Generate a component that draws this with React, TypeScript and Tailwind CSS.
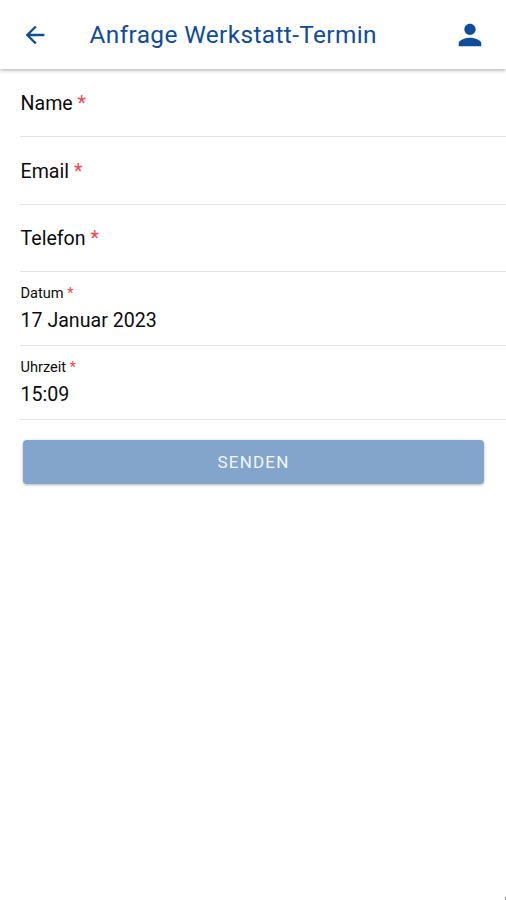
import React from "react";

type FieldProps = { label: string; value?: string };

function Field({ label, value }: FieldProps) {
  if (!value) {
    return (
      <div className="ml-5 flex h-[67.75px] items-center border-b border-[#e4e4e4] pl-[0.5px] pt-[3px] text-[19.6px] leading-6">
        <span>
          {label} <span className="text-[#f5454a]">*</span>
        </span>
      </div>
    );
  }
  return (
    <div className="ml-5 h-[73.75px] border-b border-[#e4e4e4] pl-[0.5px] pt-[12px]">
      <div className="text-[14.6px] leading-[18px]">
        {label} <span className="text-[#f5454a]">*</span>
      </div>
      <div className="mt-[7px] text-[19.6px] leading-6">{value}</div>
    </div>
  );
}

export default function App() {
  return (
    <div className="relative h-[900px] w-[506px] overflow-hidden bg-white font-[Roboto,sans-serif] text-[#0c0c0c]">
      <header className="flex h-[69px] items-center text-[#0f4c99] shadow-[0_1px_4px_rgba(0,0,0,0.35)]">
        <svg className="ml-[21px] h-7 w-7" viewBox="0 0 24 24" fill="currentColor">
          <path d="M20 11H7.83l5.59-5.59L12 4l-8 8 8 8 1.41-1.41L7.83 13H20v-2z" />
        </svg>
        <h1 className="ml-[40.5px] flex-1 whitespace-nowrap pt-px text-[24.4px] tracking-[0.38px]">
          Anfrage Werkstatt-Termin
        </h1>
        <svg className="mr-[19px] h-[34px] w-[34px]" viewBox="0 0 24 24" fill="currentColor">
          <path d="M12 12c2.21 0 4-1.79 4-4s-1.79-4-4-4-4 1.79-4 4 1.79 4 4 4zm0 2c-2.67 0-8 1.34-8 4v2h16v-2c0-2.66-5.33-4-8-4z" />
        </svg>
      </header>
      <main>
        <Field label="Name" />
        <Field label="Email" />
        <Field label="Telefon" />
        <Field label="Datum" value="17 Januar 2023" />
        <Field label="Uhrzeit" value="15:09" />
        <button className="ml-[23px] mt-5 block h-11 w-[461px] rounded bg-[#83a5cc] pt-0.5 text-[17px] tracking-[1.2px] text-[#f1f6fb] shadow-[0_1px_3px_rgba(0,0,0,0.3)]">
          SENDEN
        </button>
      </main>
      <div className="absolute bottom-0 right-0 h-[3px] w-px bg-[#9a94a0]" />
    </div>
  );
}
